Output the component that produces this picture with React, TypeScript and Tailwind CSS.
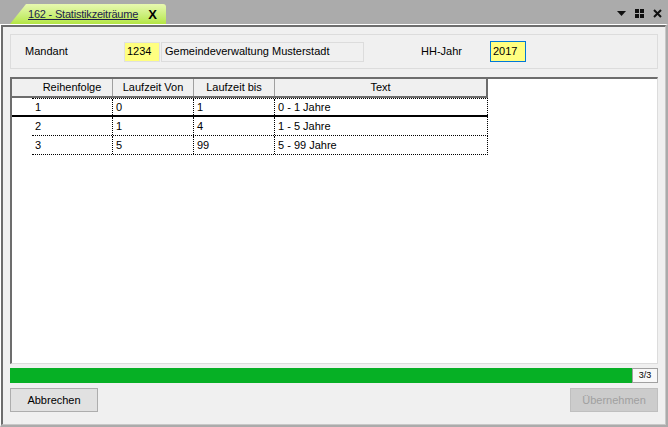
import React from 'react';

interface Zeitraum {
  reihenfolge: number;
  von: number;
  bis: number;
  text: string;
}

const rows: Zeitraum[] = [
  { reihenfolge: 1, von: 0, bis: 1, text: '0 - 1 Jahre' },
  { reihenfolge: 2, von: 1, bis: 4, text: '1 - 5 Jahre' },
  { reihenfolge: 3, von: 5, bis: 99, text: '5 - 99 Jahre' },
];

export default function App() {
  return (
    <div className="w-[668px] h-[427px] bg-[#ababab] flex flex-col font-['Liberation_Sans',Arial,sans-serif] text-[11px] text-black overflow-hidden">
      {/* Tab strip */}
      <div className="h-[24px] flex items-end justify-between">
        <div className="ml-[10px] h-[20px] w-[156px] flex items-center pl-[18px] pr-[9px] justify-between bg-gradient-to-b from-[#e8f8b0] to-[#b4e640] rounded-tr-[3px] [clip-path:polygon(0_100%,16px_0,100%_0,100%_100%)]">
          <span className="underline text-[#1c1c4c] text-[11px] whitespace-nowrap tracking-[-0.2px]">162 - Statistikzeiträume</span>
          <span className="font-bold text-[13px] leading-none">X</span>
        </div>
        <div className="flex items-center gap-[9px] mr-[6px] mb-[6px]">
          <svg width="9" height="5" viewBox="0 0 9 5"><path d="M0 0 H9 L4.5 5 Z" fill="#111" /></svg>
          <svg width="9" height="9" viewBox="0 0 9 9" fill="#111">
            <rect x="0" y="0" width="4" height="4" />
            <rect x="5" y="0" width="4" height="4" />
            <rect x="0" y="5" width="4" height="4" />
            <rect x="5" y="5" width="4" height="4" />
          </svg>
          <svg width="9" height="9" viewBox="0 0 9 9"><path d="M1 1 L8 8 M8 1 L1 8" stroke="#111" strokeWidth="2" /></svg>
        </div>
      </div>

      {/* Panel */}
      <div className="flex-1 flex flex-col border-t border-l border-white border-r-2 border-b-2 border-r-[#ababab] border-b-[#ababab]">
        <div className="flex-1 flex flex-col bg-[#f0f0f0] border-t-2 border-l-2 border-[#6d6d6d] border-r border-b border-r-[#c8c8c8] border-b-[#c8c8c8] px-[7px] pt-[7px] pb-[12px]">
          {/* Header group */}
          <div className="h-[35px] border border-[#dcdcdc] flex items-center">
            <span className="ml-[14px] w-[99px]">Mandant</span>
            <div className="w-[36px] h-[20px] bg-[#ffff80] border border-[#e0e0e0] flex items-center pl-[2px]">1234</div>
            <div className="ml-[1px] w-[203px] h-[20px] border border-[#dcdcdc] flex items-center pl-[3px]">Gemeindeverwaltung Musterstadt</div>
            <span className="ml-[57px] w-[69px]">HH-Jahr</span>
            <div className="w-[36px] h-[21px] bg-[#ffff80] border border-[#0078d7] flex items-center pl-[2px]">2017</div>
          </div>

          {/* Grid */}
          <div className="mt-[8px] flex-1 bg-white border-t-2 border-l-2 border-[#6d6d6d] border-r border-b border-r-[#dcdcdc] border-b-[#dcdcdc]">
            <div className="flex h-[19px] w-[476px] bg-[#f0f0f0] border-b-2 border-[#6d6d6d] border-r-2 border-r-[#6d6d6d]">
              <div className="w-[20px]" />
              <div className="w-[81px] border-r border-[#a0a0a0] flex items-center justify-center">Reihenfolge</div>
              <div className="w-[81px] border-r border-[#a0a0a0] flex items-center justify-center">Laufzeit Von</div>
              <div className="w-[81px] border-r border-[#a0a0a0] flex items-center justify-center">Laufzeit bis</div>
              <div className="flex-1 flex items-center justify-center">Text</div>
            </div>
            {rows.map((r, i) => (
              <div
                key={r.reihenfolge}
                className={`flex h-[19px] w-[476px] ${i === 0 ? 'border-b-2 border-black' : ''}`}
              >
                <div className="w-[20px]" />
                <div className={`flex-1 flex border-dotted border-black border-r ${i === 0 ? 'border-t' : 'border-b'}`}>
                  <div className="w-[81px] border-r border-dotted border-black flex items-center pl-[3px]">{r.reihenfolge}</div>
                  <div className="w-[81px] border-r border-dotted border-black flex items-center pl-[3px]">{r.von}</div>
                  <div className="w-[81px] border-r border-dotted border-black flex items-center pl-[3px]">{r.bis}</div>
                  <div className="flex-1 flex items-center pl-[3px]">{r.text}</div>
                </div>
              </div>
            ))}
          </div>

          {/* Progress */}
          <div className="mt-[4px] flex h-[15px]">
            <div className="flex-1 bg-[#06b025]" />
            <div className="w-[26px] border border-[#a0a0a0] bg-[#f8f8f8] flex items-center justify-center text-[9px]">3/3</div>
          </div>

          {/* Buttons */}
          <div className="mt-[5px] flex justify-between">
            <button className="w-[88px] h-[24px] bg-[#e1e1e1] border border-[#adadad]">Abbrechen</button>
            <button disabled className="w-[88px] h-[24px] bg-[#cccccc] border border-[#bfbfbf] text-[#a0a0a0]">Übernehmen</button>
          </div>
        </div>
      </div>
    </div>
  );
}
